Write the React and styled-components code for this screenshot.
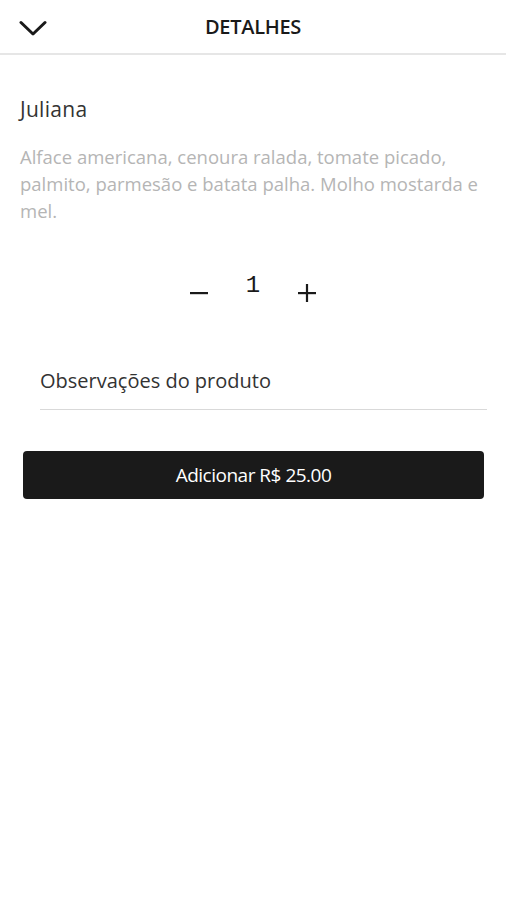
import React, { useState } from "react";
import styled, { createGlobalStyle } from "styled-components";

const GlobalStyle = createGlobalStyle`
  body {
    margin: 0;
    background: #fff;
    font-family: "Open Sans", "Noto Sans", sans-serif;
    color: #1a1a1a;
  }
`;

const Page = styled.div`
  width: 506px;
  min-height: 900px;
  background: #fff;
`;

const Header = styled.header`
  position: relative;
  height: 53px;
  display: flex;
  align-items: center;
  justify-content: center;
  border-bottom: 2px solid #e6e6e6;
`;

const BackButton = styled.button`
  position: absolute;
  left: 18px;
  top: 19px;
  width: 30px;
  height: 18px;
  padding: 0;
  border: none;
  background: none;
  display: flex;
  align-items: center;
  justify-content: center;
`;

const Title = styled.h1`
  margin: 0;
  font-size: 20px;
  font-weight: 600;
  letter-spacing: -0.3px;
  color: #1a1a1a;
`;

const Content = styled.main`
  padding: 40px 20px 0;
`;

const ProductName = styled.h2`
  margin: 0;
  font-size: 21px;
  line-height: 28px;
  font-weight: 400;
  letter-spacing: 0.3px;
  color: #333;
`;

const Description = styled.p`
  margin: 20px 0 0;
  font-size: 18.5px;
  line-height: 27px;
  color: #b5b5b5;
`;

const Quantity = styled.div`
  margin-top: 58px;
  display: flex;
  align-items: center;
  justify-content: center;
  gap: 36px;
  height: 22px;
`;

const StepButton = styled.button`
  border: none;
  background: none;
  padding: 0;
  width: 22px;
  height: 22px;
  display: flex;
  align-items: center;
  justify-content: center;
`;

const Count = styled.span`
  font-family: "Liberation Mono", monospace;
  font-size: 24px;
  line-height: 22px;
  color: #1a1a1a;
  margin-top: -15px;
`;

const NoteField = styled.input`
  display: block;
  box-sizing: border-box;
  width: 447px;
  height: 43px;
  margin: 63px 0 0 20px;
  padding: 0 0 15px;
  border: none;
  border-bottom: 1px solid #d9d9d9;
  font-family: "Open Sans", "Noto Sans", sans-serif;
  font-size: 20px;
  line-height: 27px;
  color: #333;
  outline: none;
  &::placeholder {
    color: #333;
  }
`;

const AddButton = styled.button`
  display: block;
  width: 461px;
  height: 48px;
  margin: 41px 0 0 3px;
  border: none;
  border-radius: 4px;
  background: #1a1a1a;
  color: #fff;
  font-family: "Open Sans", "Noto Sans", sans-serif;
  font-size: 19px;
  letter-spacing: -0.5px;
`;

export default function App() {
  const [qty, setQty] = useState(1);
  const price = 25;
  return (
    <Page>
      <GlobalStyle />
      <Header>
        <BackButton aria-label="Voltar">
          <svg width="28" height="17" viewBox="0 0 28 17">
            <path d="M2 2.5 L14 14 L26 2.5" fill="none" stroke="#1a1a1a" strokeWidth="3" strokeLinecap="round" strokeLinejoin="round" />
          </svg>
        </BackButton>
        <Title>DETALHES</Title>
      </Header>
      <Content>
        <ProductName>Juliana</ProductName>
        <Description>
          Alface americana, cenoura ralada, tomate picado, palmito, parmesão e batata palha. Molho mostarda e mel.
        </Description>
        <Quantity>
          <StepButton onClick={() => setQty(Math.max(1, qty - 1))} aria-label="Diminuir">
            <svg width="20" height="4" viewBox="0 0 20 4">
              <rect x="1" y="1" width="18" height="2.2" fill="#1a1a1a" />
            </svg>
          </StepButton>
          <Count>{qty}</Count>
          <StepButton onClick={() => setQty(qty + 1)} aria-label="Aumentar">
            <svg width="20" height="20" viewBox="0 0 20 20">
              <rect x="1" y="9" width="18" height="2.2" fill="#1a1a1a" />
              <rect x="8.9" y="1" width="2.2" height="18" fill="#1a1a1a" />
            </svg>
          </StepButton>
        </Quantity>
        <NoteField placeholder="Observações do produto" />
        <AddButton>Adicionar R$ {(price * qty).toFixed(2)}</AddButton>
      </Content>
    </Page>
  );
}
